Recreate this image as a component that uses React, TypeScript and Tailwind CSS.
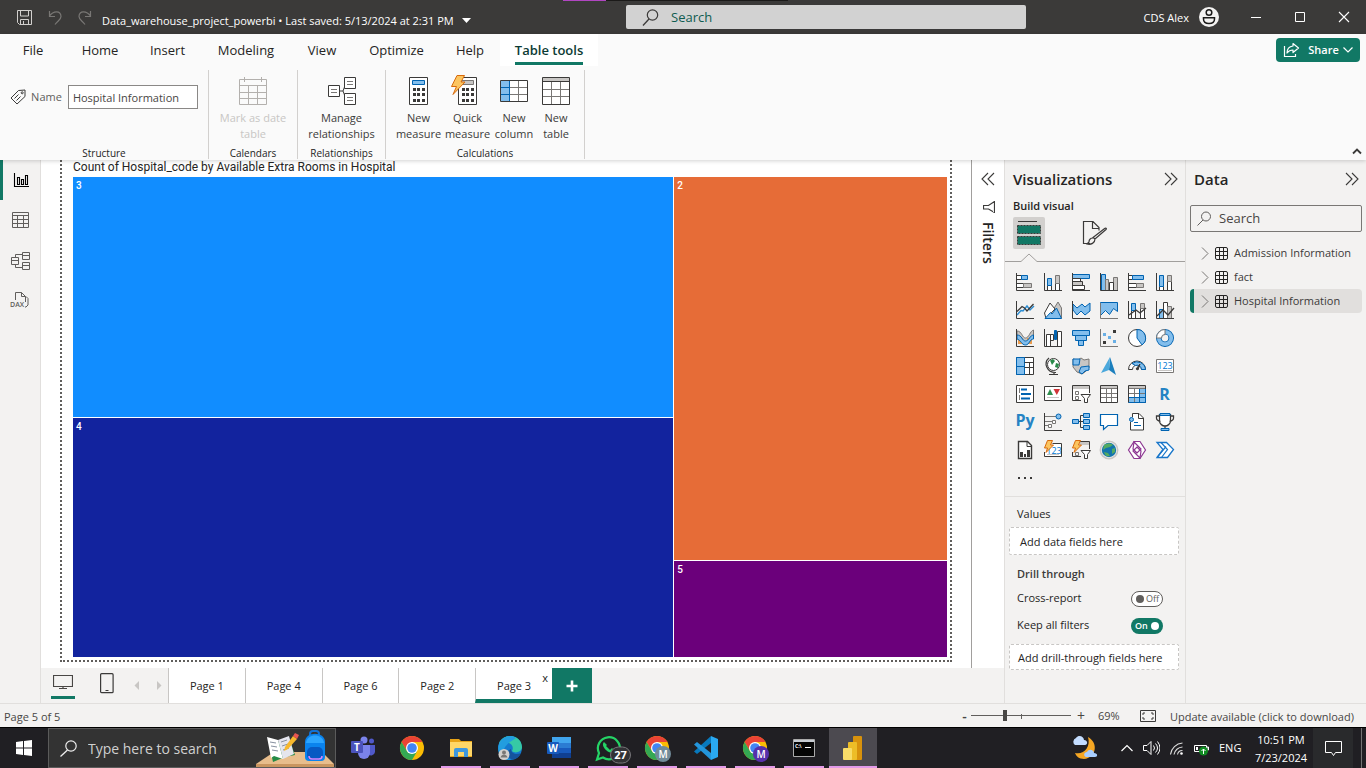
import React from "react";
import type { ReactNode } from "react";

const K = "#3b3a39";
const G = "#797775";
const GF = "#c8c6c4";
const B = "#0063b1";
const BF = "#83beec";

type SvgProps = { w?: number; h?: number; children: ReactNode; className?: string };

function Svg({ w = 18, h = 18, children, className }: SvgProps) {
  return (
    <svg
      aria-hidden="true"
      width={w}
      height={h}
      viewBox={`0 0 ${w} ${h}`}
      fill="none"
      className={`shrink-0 ${className ?? ""}`}
    >
      {children}
    </svg>
  );
}

const Axis = () => <path d="M.5 0v17.5H18" stroke={K} />;

const Bolt = () => (
  <path d="M3.5-.5h5L6.5 4h3L2 11.5 3.5 7H.5z" fill="#fcc560" stroke="#d86a0c" strokeLinejoin="round" />
);

const visuals: { name: string; art: ReactNode }[] = [
  { name: "Stacked bar chart", art: <><path d="M.5 2.5h5v4h-5zM.5 10.5h7v4h-7z" stroke={K} fill="#fff" /><path d="M5.5 2.5h6v4h-6z" fill={BF} stroke={B} /><path d="M7.5 10.5h8v4h-8z" fill={GF} stroke={G} /><Axis /></> },
  { name: "Stacked column chart", art: <><path d="M3.5 12.5h4v5h-4zM11.5 10.5h4v7h-4z" stroke={K} fill="#fff" /><path d="M3.5 5.5h4v7h-4z" fill={BF} stroke={B} /><path d="M11.5 2.5h4v8h-4z" fill={GF} stroke={G} /><Axis /></> },
  { name: "Clustered bar chart", art: <><path d="M.5 1.500h17v4H.5z" fill={BF} stroke={B} /><path d="M.5 5.5h8v3h-8zM.5 12.5h12v4H.5z" fill="#fff" stroke={K} /><path d="M.5 8.5h10v4H.5z" fill={GF} stroke={K} /><Axis /></> },
  { name: "Clustered column chart", art: <><path d="M1.5 1.5h4v16h-4z" fill={BF} stroke={B} /><path d="M5.5 6.5h3v11h-3zM13.5 4.5h4v13h-4z" fill={GF} stroke={G} /><path d="M9.5 9.5h4v8h-4z" fill="#fff" stroke={K} /><Axis /></> },
  { name: "100% stacked bar chart", art: <><path d="M.5 2.5h4v4h-4zM.5 10.5h8v4h-8z" stroke={K} fill="#fff" /><path d="M4.5 2.5h11v4h-11z" fill={BF} stroke={B} /><path d="M8.5 10.5h7v4h-7z" fill={GF} stroke={G} /><Axis /></> },
  { name: "100% stacked column chart", art: <><path d="M3.5 13.5h4v4h-4zM11.5 8.5h4v9h-4z" stroke={K} fill="#fff" /><path d="M3.5 2.5h4v11h-4z" fill={BF} stroke={B} /><path d="M11.5 2.5h4v6h-4z" fill={GF} stroke={G} /><Axis /></> },
  { name: "Line chart", art: <><path d="m1 14 4-4.500 2 .500 4-5 3 4 4-4" stroke="#2a8dd4" strokeWidth="1.400" /><path d="m1 9.500 4-1L10 4l3 5 5-5" stroke="none" /><path d="m1 10.500 5-5 2.500 1.500 2.500 3L17.500 3" stroke={K} strokeWidth="1.300" /><Axis /></> },
  { name: "Area chart", art: <><path d="M9 9 14 1l3.500 6v10L9 9z" fill={GF} stroke={G} /><path d="M.5 12 6 2l5 6-9 9.500z" fill="#fff" stroke={K} /><path d="m1 17.500 5.500-6L8 13l4.500-6 5 10.500z" fill={BF} stroke={B} /></> },
  { name: "Stacked area chart", art: <><path d="m1 3 4 4 5-4 3 3 5-4v8l-5 4-4-4-4 4-4-5z" fill={BF} stroke={B} /><Axis /></> },
  { name: "100% stacked area chart", art: <><path d="M.5 1.500h17v9l-4-3-4 6-4-4-5 5z" fill={BF} stroke={B} /><path d="M.5 2v15.500H18" stroke={G} /></> },
  { name: "Line and stacked column chart", art: <><path d="M3.5 9.5h4v8h-4zM12.500 6.5h4v11h-4z" fill="#fff" stroke={K} /><path d="M3.5 2.5h4v7h-4z" fill={BF} stroke={B} /><path d="M12.500 2.5h4v5h-4z" fill={GF} stroke={G} /><path d="m1 14 7-5 4 3 6-5" stroke={K} strokeWidth="1.300" /><Axis /></> },
  { name: "Line and clustered column chart", art: <><path d="M3.5 8.5h4v9h-4z" fill={BF} stroke={B} /><path d="M7.5 1.5h4v16h-4z" fill="#fff" stroke={K} /><path d="M11.5 5.5h4v12h-4z" fill={GF} stroke={G} /><path d="m1 15 6-6 5 5 6-7" stroke={K} strokeWidth="1.300" /><Axis /></> },
  { name: "Ribbon chart", art: <><path d="M1 2c5 0 5 7 8.500 7S14 2 17.500 1v6c-4 1-4 6-8 6S5 9 1 8z" fill={GF} stroke={G} /><path d="M2 9h5v6H2zM11 9h5v6h-5z" fill="#ec9b4b" /><path d="M1 6c5 0 5 6 8.500 6S14 6 17.500 6v4c-4 0-4 6-8 6S5 11 1 10z" fill={BF} stroke={B} /><Axis /></> },
  { name: "Waterfall chart", art: <><path d="M2.5 5.5h4v12h-4zM13.5 2.5h4v15h-4zM6.500 5.5h3v6h-3z" fill="#fff" stroke={K} /><path d="M10.500 1.500h2v9h-2z" fill={B} stroke={B} /><path d="M.5 0v17.500H18" stroke={K} /></> },
  { name: "Funnel chart", art: <><path d="M.5 1.500h17v5H.5z" fill={BF} stroke={B} /><path d="M3.500 6.500h11v5h-11zM6.500 11.500h5v5h-5z" fill={BF} stroke={B} /></> },
  { name: "Scatter chart", art: <><path d="M3 4h3v3H3zM8 7h3v3H8zM13 11h3v3h-3z" fill="#69afe5" /><path d="M13 1h3v3h-3zM3 12h3v3H3z" fill={K} /><path d="M.5 0v17.500H18" stroke={G} /></> },
  { name: "Pie chart", art: <><circle cx="9" cy="9" r="8.500" fill="#fff" stroke={K} /><path d="M9 .5a8.500 8.500 0 0 1 5 15.400L9 9z" fill={BF} stroke={B} /></> },
  { name: "Donut chart", art: <><circle cx="9" cy="9" r="6.200" stroke={B} strokeWidth="5.600" /><circle cx="9" cy="9" r="6.200" stroke={BF} strokeWidth="3.800" /><path d="M.5 9A8.500 8.500 0 0 1 9 .5v5A3.500 3.500 0 0 0 5.500 9z" fill="#fff" stroke={G} /></> },
  { name: "Treemap", art: <><path d="M.5 .5h17v17H.5z" fill="#fff" stroke={K} /><path d="M.5 .5h8v9h-8zM.5 9.500h8v8h-8z" fill={BF} stroke={B} /><path d="M8.500 5.500h9M13.500 5.500v5m0 0h4m-9 0h5v7" stroke={K} /></> },
  { name: "Map", art: <><circle cx="9.500" cy="7.500" r="6" fill="#fff" stroke={K} /><path d="M6 3.500 9 2l2 2-3 4zM12 6l3 1-1 4-3-1z" fill="#2b8a4b" /><path d="M5 1C-1 6 3 16 12 15.500M5 17.500h9M10 15v2.500" stroke={K} strokeWidth="1.200" /></> },
  { name: "Filled map", art: <><path d="m1 2 5 1 3-2 3 2 5-1v9l-4 4-3 2-5-2-4-5z" fill={GF} stroke={G} /><path d="M1 2h7l-1 6H1zM9 10l8-1v4l-4 1-3 3-3-2z" fill={BF} stroke={B} /></> },
  { name: "Azure map", art: <><path d="m10 0 6 18-7-5z" fill="#1b7fbd" /><path d="M10 0 1 16l8-3z" fill="#4ba8dc" /></> },
  { name: "Gauge", art: <><path d="M.5 12.500a8.500 8.500 0 0 1 17 0h-4a4.500 4.500 0 0 0-9 0z" fill="#fff" stroke={K} /><path d="M4 6.500A8.500 8.500 0 0 1 17.500 12.500h-4a4.500 4.500 0 0 0-6-4z" fill={BF} stroke={B} /><path d="m8 12 4-5-2 6z" fill={K} stroke={K} /></> },
  { name: "Card", art: <><path d="M.5 2.500h17v13H.5z" fill="#fff" stroke={G} /><text x="9" y="12" fontSize="9" fill="#0078d4" textAnchor="middle">123</text><path d="M2 13.500h14" stroke={GF} /></> },
  { name: "Multi-row card", art: <><path d="M.5 .5h17v17H.5z" fill="#fff" stroke={K} /><path d="M5 4.500h6M5 9h10M5 13.500h9" stroke={B} strokeWidth="1.800" /><path d="M3.500 3v5m0 2v5" stroke={G} /></> },
  { name: "KPI", art: <><path d="M.5 1.500h17v14H.5z" fill="#fff" stroke={K} /><path d="m6 4 3 6H3z" fill="#2f8f4e" /><path d="M9.500 4H16l-3.200 6z" fill="#d13438" /><path d="M3 12.500h12" stroke={GF} /></> },
  { name: "Slicer", art: <><path d="M17.500 8V.5H.5v15H9" fill="#fff" stroke={K} /><path d="M1 1h16v3H1z" fill={GF} /><path d="M3.500 6.500h3v3h-3zM3.500 11.500h3v3h-3z" stroke={G} /><path d="M9 9.500h9.500l-3 4v4h-3v-4z" fill="#fff" stroke={K} /></> },
  { name: "Table", art: <><path d="M.5 .5h17v17H.5z" fill="#fff" stroke={K} /><path d="M1 1h16v2H1z" fill={GF} /><path d="M1 3.500h16M1 8.500h16M1 12.500h16M6.500 4v13M11.500 4v13" stroke={G} /></> },
  { name: "Matrix", art: <><path d="M.5 .5h17v17H.5z" fill="#fff" stroke={K} /><path d="M1 1h16v2H1z" fill={GF} /><path d="M12 4h5v13H1v-4h11z" fill={BF} /><path d="M1 3.500h16M1 8.500h16M6.500 4v13M11.500 4v13" stroke={G} /><path d="M1 12.500h16M11.500 4v13M.5 17.500h17V4" stroke={B} /></> },
  { name: "R script visual", art: <text x="8.500" y="15" fontSize="16" fontWeight="700" fill="#2583c4" textAnchor="middle">R</text> },
  { name: "Python visual", art: <text x="9" y="13" fontSize="16" fontWeight="700" fill="#2583c4" textAnchor="middle">Py</text> },
  { name: "Key influencers", art: <><path d="M1 3.500h12M1 8.500h9M1 12.500h4" stroke={G} /><circle cx="14.500" cy="3.500" r="2.500" fill={BF} stroke={B} /><path d="M8.500 7.500h3v3h-3zM4.500 11.500h3v3h-3z" fill="#fff" stroke={G} /><Axis /></> },
  { name: "Decomposition tree", art: <><path d="M6 8.500h6M12 2.500H8.500v12H12" stroke={K} /><path d="M.5 6.500h6v4h-6zM11.500 .5h6v4h-6zM11.500 6.500h6v4h-6zM11.500 12.500h6v4h-6z" fill={BF} stroke={B} /></> },
  { name: "Q and A", art: <path d="M.5 1.500h17v11H8l-4.500 4V12.500h-3z" fill="#fff" stroke={B} strokeWidth="1.200" /> },
  { name: "Smart narrative", art: <><path d="M4.500 4V.5H11L15.500 5v12h-13V9" fill="#fff" stroke={K} /><path d="M10.500 1v4.500H15" stroke={K} /><circle cx="3.500" cy="6.500" r="2" fill={BF} stroke={B} /><path d="M6 9.500h4M6 12.500h7" stroke={B} /></> },
  { name: "Goals", art: <><path d="M4 3H.5v2c0 2 2 3 4 3.500M14 3h3.500v2c0 2-2 3-4 3.500M3.500 1v7c0 3 3 5 5.500 5s5.500-2 5.500-5V1M9 13v3" fill="#fff" stroke={K} strokeWidth="1.300" /><path d="M4 .5h10v2H4zM5 15.500h8v2H5z" fill={BF} stroke={B} /></> },
  { name: "Paginated report", art: <><path d="M2.500 .5h9l4 4v13h-13z" fill="#fff" stroke={K} strokeWidth="1.400" /><path d="M11 1v4.500h4" stroke={K} /><path d="M4 11h3v5H4zM8 13h2v3H8zM11 9h3v7h-3z" fill={K} /></> },
  { name: "New card", art: <><path d="M8.500 2.500h9v13H.5V11" fill="#fff" stroke={K} /><text x="10" y="12.500" fontSize="9" fill="#0078d4" textAnchor="middle">123</text><path d="M3 13.500h12" stroke={GF} /><Bolt /></> },
  { name: "New slicer", art: <><path d="M7 .5h10.500V8M9 15.500H.5V11" stroke={K} /><path d="M8 1h9v3H8z" fill={GF} /><path d="M3.500 11.500h3v3h-3z" stroke={G} /><path d="M9 9.500h9.500l-3 4v4h-3v-4z" fill="#fff" stroke={K} /><Bolt /></> },
  { name: "ArcGIS maps", art: <><circle cx="9" cy="9" r="8.700" fill="#f3f2f1" stroke={GF} strokeWidth="1.500" /><circle cx="9" cy="9" r="7.200" fill="#1374ac" /><path d="M4 4c3-2 7-2 9 0l-3 2-4 1-3 2zM12 8l3-1v4l-3 2zM4 11l4 1 2 3c-4 1-5-1-6-4z" fill="#53aa61" /></> },
  { name: "Power Apps", art: <><path d="M6 .5h6L17.500 9 12 17.500H6L.5 9z" fill="#fff" stroke="#8d3792" strokeWidth="1.200" /><path d="M6 1 13 8 9 12 5 8zM12 17 5 10 9 6l4 4z" stroke="#8d3792" strokeWidth="1.200" /></> },
  { name: "Power Automate", art: <><path d="M1 1.500h9.500l7 7-6 8H1l6-8z" fill="#fff" stroke="#1976c9" strokeWidth="1.300" /><path d="m5 1.500 6.500 7-6 8M1 16.500l9-11" stroke="#1976c9" strokeWidth="1.200" /></> },
];

const tabs: { label: string; width: string }[] = [
  { label: "File", width: "w-[66px]" },
  { label: "Home", width: "w-[68px]" },
  { label: "Insert", width: "w-[67px]" },
  { label: "Modeling", width: "w-[90px]" },
  { label: "View", width: "w-[62px]" },
  { label: "Optimize", width: "w-[87px]" },
  { label: "Help", width: "w-[60px]" },
];

function TitleBar() {
  return (
    <header className="relative flex h-[34px] shrink-0 items-center bg-[#3b3a39] text-white">
      <div className="absolute left-[563px] top-0 flex h-px w-[225px] bg-[#1b1a19]"><span className="h-px w-[43px] bg-[#b146c2]" /></div>
      <div className="flex w-[626px] shrink-0 items-center pl-4">
        <button aria-label="Save" className="mr-3.5"><Svg w={17} h={17}><path d="M1.500 1.500h14v14H3.500l-2-2zM4.500 2v5h8V2M4.500 15.500v-5h8v5M7.500 12v3" stroke="#d2d0ce" /></Svg></button>
        <button aria-label="Undo" className="mr-3.5"><Svg w={16} h={17}><path d="M2.500 2v5.500H8M2.500 7C6 2 14 1 14 7.500c0 3-3 4-6 8" stroke="#797775" strokeWidth="1.200" /></Svg></button>
        <button aria-label="Redo" className="mr-[9px]"><Svg w={16} h={17}><path d="M13.500 2v5.500H8M13.500 7C10 2 2 1 2 7.500c0 3 3 4 6 8" stroke="#797775" strokeWidth="1.200" /></Svg></button>
        <button className="flex items-center gap-2 pt-2 text-[11px] font-medium leading-4 whitespace-nowrap">
          Data_warehouse_project_powerbi • Last saved: 5/13/2024 at 2:31 PM
          <Svg w={9} h={9}><path d="M0 1h9L4.500 6z" fill="#fff" /></Svg>
        </button>
      </div>
      <label className="flex h-6 w-[400px] items-center gap-3 rounded-[2px] bg-[#d2d2d2] pl-4">
        <Svg w={17} h={17}><circle cx="10.500" cy="6" r="5.200" stroke={K} strokeWidth="1.200" /><path d="m7 10-6 6.500" stroke={K} strokeWidth="1.300" /></Svg>
        <input type="search" aria-label="Search commands" placeholder="Search" className="min-w-0 flex-1 bg-transparent text-[13px] leading-5 outline-none placeholder:text-[#0f5c50]" />
      </label>
      <div className="ml-auto flex items-center">
        <span className="mr-2.5 pt-0.5 text-[11px] font-medium">CDS Alex</span>
        <button aria-label="Account" className="mr-[31px]"><Svg w={20} h={20}><circle cx="10" cy="10" r="10" fill="#f3f2f1" /><circle cx="10" cy="5.500" r="2.800" stroke="#1b1a19" strokeWidth="1.500" /><path d="M4.500 10.800h11v1.200c0 3-2.500 4.500-5.500 4.500S4.500 15 4.500 12z" stroke="#1b1a19" strokeWidth="1.500" /></Svg></button>
        <button aria-label="Minimize" className="mr-8"><Svg w={12} h={12}><path d="M1 6.500h10" stroke="#fff" /></Svg></button>
        <button aria-label="Maximize" className="mr-8"><Svg w={12} h={12}><path d="M1.500 1.500h9v9h-9z" stroke="#fff" /></Svg></button>
        <button aria-label="Close" className="mr-4"><Svg w={12} h={12}><path d="m1 1 10 10M11 1 1 11" stroke="#fff" strokeWidth="1.100" /></Svg></button>
      </div>
    </header>
  );
}

function RibbonGroup({ label, className, children }: { label: string; className: string; children: ReactNode }) {
  return (
    <section aria-label={label} className={`flex h-[89px] shrink-0 flex-col border-r border-[#d2d0ce] ${className}`}>
      <div className="flex flex-1 justify-center">{children}</div>
      <div className="text-center text-[10px] leading-3">{label}</div>
    </section>
  );
}

function RibbonButton({ lines, icon, className = "", disabled }: { lines: [string, string]; icon: ReactNode; className?: string; disabled?: boolean }) {
  return (
    <button disabled={disabled} className={`flex shrink-0 flex-col items-center text-[11px] leading-4 whitespace-nowrap ${disabled ? "text-[#c8c6c4]" : "text-[#3b3a39]"} ${className}`}>
      <span className="mb-1 mt-1.5 flex h-[30px] items-center">{icon}</span>
      <span>{lines[0]}</span>
      <span>{lines[1]}</span>
    </button>
  );
}

function Calculator() {
  return (
    <>
      <path d="M5.500 1.500h18v27h-18z" fill="#fff" stroke={K} />
      <path d="M9 12h3v3H9zM13 12h3v3h-3zM18 12h3v3h-3zM9 17h3v3H9zM13 17h3v3h-3zM18 17h3v3h-3zM9 23h3v3H9zM13 23h3v3h-3zM18 23h3v3h-3z" fill={K} />
    </>
  );
}

function Ribbon() {
  return (
    <div className="relative z-10 h-[126px] shrink-0 bg-[#fafafa] text-[#252423] shadow-[0_1px_4px_rgba(0,0,0,0.18)]">
      <nav aria-label="Ribbon tabs" className="flex h-8 text-[13px]">
        {tabs.map((t) => (
          <button key={t.label} className={`shrink-0 pt-0.5 ${t.width}`}>{t.label}</button>
        ))}
        <button className="relative w-[98px] shrink-0 bg-white pt-0.5 font-semibold text-[#0c3b34]">
          Table tools
          <span className="absolute bottom-px left-[15px] right-[15px] h-[3px] bg-[#117865]" />
        </button>
        <button className="ml-auto mr-1.5 mt-1 flex h-6 w-[84px] shrink-0 items-center justify-center gap-2 rounded-[4px] bg-[#117865] text-[11px] font-semibold text-white">
          <Svg w={17} h={16}><path d="M1.500 4v10.500h11V12" stroke="#fff" strokeWidth="1.200" /><path d="M10 1.500 15.500 6 10 10.500V8c-3 0-4.500 1-6 3 0-4 2.500-6.500 6-7z" stroke="#fff" strokeWidth="1.200" strokeLinejoin="round" /></Svg>
          <span className="-mr-1">Share</span>
          <Svg w={10} h={8}><path d="m.5 1.500 4.500 4.500 4.500-4.500" stroke="#fff" strokeWidth="1.200" /></Svg>
        </button>
      </nav>
      <div className="flex pt-1">
        <RibbonGroup label="Structure" className="w-[209px]">
          <label className="mt-[15px] flex h-6 items-center text-[11px] text-[#605e5c]">
            <Svg w={17} h={16} className="mr-1"><path d="m1 9 7.500-7.500L15 1v6.500L7 15z" stroke={K} strokeLinejoin="round" /><circle cx="12.200" cy="3.800" r="1" stroke={K} /><path d="m4.500 9.500 4-4M6.500 11.500l4-4" stroke={K} /></Svg>
            <span className="mr-1.5">Name</span>
            <input defaultValue="Hospital Information" className="h-6 w-[130px] border border-[#8a8886] bg-white px-1 text-[11px] text-[#484644] outline-none" />
          </label>
        </RibbonGroup>
        <RibbonGroup label="Calendars" className="w-[89px]">
          <RibbonButton disabled lines={["Mark as date", "table"]} icon={<Svg w={30} h={30}><path d="M1.500 3.500h27v25h-27zM1.500 9.500h27M1.500 16.500h27M1.500 22.500h27M10.500 9.500v19M19.500 9.500v19M6.500 1v5M23.500 1v5" stroke="#b3b0ad" /></Svg>} />
        </RibbonGroup>
        <RibbonGroup label="Relationships" className="w-[88px]">
          <RibbonButton lines={["Manage", "relationships"]} icon={<Svg w={30} h={30}><path d="M13 15h3l3-8M16 15l3 8" stroke={K} /><path d="M1.500 9.500h11v11h-11zM17.500 1.500h11v11h-11zM17.500 17.500h11v11h-11z" fill="#fff" stroke={K} /><path d="M4 13.500h6M4 16.500h6M20 5.500h6M20 8.500h6M20 21.500h6M20 24.500h6" stroke={G} /></Svg>} />
        </RibbonGroup>
        <RibbonGroup label="Calculations" className="w-[199px]">
          <RibbonButton className="w-[49px]" lines={["New", "measure"]} icon={<Svg w={29} h={30}><Calculator /><path d="M8.500 4.500h12v4h-12z" fill={BF} stroke={B} /></Svg>} />
          <RibbonButton className="w-[49px]" lines={["Quick", "measure"]} icon={<Svg w={29} h={30} className="overflow-visible"><Calculator /><path d="M8.500 4.500h12v4h-12z" fill={GF} stroke={G} /><path d="M4-.5h7.500L8 6h4L0 18.500 3.500 10.500H-1.500z" fill="#fcc560" stroke="#d86a0c" strokeLinejoin="round" /></Svg>} />
          <RibbonButton className="w-[44px]" lines={["New", "column"]} icon={<Svg w={28} h={30}><path d="M.5 4.500h27v21H.5z" fill="#fff" stroke={K} /><path d="M1 5h8v20H1z" fill={BF} /><path d="M9 11.500h18M9 18.500h18M18.500 5v20" stroke={G} /><path d="M1 11.500h8M1 18.500h8M9.500 5v20" stroke={B} /></Svg>} />
          <RibbonButton className="w-[40px]" lines={["New", "table"]} icon={<Svg w={28} h={30}><path d="M.5 1.500h27v27H.5z" fill="#fff" stroke={K} /><path d="M1 2h26v3H1z" fill={GF} /><path d="M1 5.500h26" stroke={K} /><path d="M1 13.500h26M1 20.500h26M9.500 6v22M18.500 6v22" stroke={G} /></Svg>} />
        </RibbonGroup>
        <button aria-label="Collapse ribbon" className="ml-auto mr-1 self-end pb-1"><Svg w={10} h={8}><path d="m1 6.500 4-4 4 4" stroke={K} strokeWidth="1.800" /></Svg></button>
      </div>
    </div>
  );
}

function ViewRail() {
  const c = "#605e5c";
  return (
    <nav aria-label="Views" className="flex w-[41px] shrink-0 flex-col border-r border-[#e1dfdd] bg-[#f3f2f1]">
      <button aria-label="Report view" className="flex h-10 w-full items-center justify-center border-l-[3px] border-[#117865] pr-0.5"><Svg w={16} h={16}><path d="M1.500 1v13.500H16M4.500 5.500h2v7h-2zM8.500 7.500h2v5h-2zM12.500 3.500h2v9h-2z" stroke="#000" strokeWidth="1.100" /></Svg></button>
      <button aria-label="Table view" className="flex h-10 w-full items-center justify-center"><Svg w={17} h={16}><path d="M.5 .5h16v15H.5zM.5 3.500h16M.5 7.500h16M.5 11.500h16M5.500 3.500v12M11.500 3.500v12" stroke={c} /></Svg></button>
      <button aria-label="Model view" className="flex h-10 w-full items-center justify-center"><Svg w={19} h={19}><path d="M.5 6.500h7v7h-7zM.5 9.500h7M11.500 1.500h7v7h-7zM11.500 4.500h7M11.500 11.500h7v7h-7zM11.500 14.500h7M4.500 6.500v-3h7M4.500 13.500v3h7" stroke={c} /></Svg></button>
      <button aria-label="DAX query view" className="flex h-10 w-full items-center justify-center"><Svg w={20} h={18}><path d="M5.500 9V1.500h6l4 4V11M11.500 1.500v4h4M15 16h1l2-2V7.500l-2-2" stroke={c} /><text x="0" y="16" fontSize="7" fontWeight="600" fill={c}>DAX</text></Svg></button>
    </nav>
  );
}

function Treemap() {
  return (
    <div className="flex min-h-0 min-w-0 flex-1 flex-col bg-white pb-1.5 pl-[19px] pr-[19px]">
      <div className="flex flex-1 flex-col border-x-2 border-b-2 border-dotted border-[#605e5c] pb-[3px] pl-[11px] pr-[3px]">
        <h2 className="h-[17px] font-['Roboto',sans-serif] text-[12px] leading-[14px] text-[#252423]">Count of Hospital_code by Available Extra Rooms in Hospital</h2>
        <div className="grid flex-1 grid-cols-[601fr_273fr] gap-px font-['Roboto',sans-serif] text-[10px] font-medium leading-3 text-white">
          <div className="grid grid-rows-2 gap-px">
            <div className="bg-[#118dff] px-[3px] py-[3px]">3</div>
            <div className="bg-[#12239e] px-[3px] py-[3px]">4</div>
          </div>
          <div className="grid grid-rows-[383fr_96fr] gap-px">
            <div className="bg-[#e66c37] px-[3px] py-[3px]">2</div>
            <div className="bg-[#6b007b] px-[3px] py-[3px]">5</div>
          </div>
        </div>
      </div>
    </div>
  );
}

function Chevrons({ left = false }: { left?: boolean }) {
  return (
    <Svg w={14} h={14}>
      <path d={left ? "M7 1 1 7l6 6M13 1 7 7l6 6" : "m1 1 6 6-6 6M7 1l6 6-6 6"} stroke={K} strokeWidth="1.100" />
    </Svg>
  );
}

function PageTabs() {
  return (
    <div className="flex h-[35px] shrink-0 bg-[#f3f2f1]">
      <div className="flex w-[127px] shrink-0 items-start">
        <button aria-label="Desktop layout" className="ml-2.5 mt-1 flex h-[27px] w-6 flex-col items-center justify-between border-b-[3px] border-[#117865] pt-0.5"><Svg w={20} h={16}><path d="M.5 1.500h19v11H.5zM10 12.500v2M6 14.500h8" stroke="#484644" strokeWidth="1.200" /></Svg></button>
        <button aria-label="Mobile layout" className="ml-[25px] mt-[5px]"><Svg w={14} h={21}><rect x=".6" y=".7" width="12.500" height="19" rx="1" stroke={K} strokeWidth="1.200" /><path d="M5.500 17.500h3" stroke={K} /></Svg></button>
        <button aria-label="Previous page" className="ml-5 mt-[13px]"><Svg w={6} h={9}><path d="M5 0v9L.5 4.500z" fill={GF} /></Svg></button>
        <button aria-label="Next page" className="ml-4 mt-[13px]"><Svg w={6} h={9}><path d="M1 0v9l4.500-4.500z" fill={GF} /></Svg></button>
      </div>
      <div className="flex w-[384px] shrink-0 text-[11px] text-[#252423]">
        {["Page 1", "Page 4", "Page 6", "Page 2"].map((p) => (
          <button key={p} className="flex-1 border-l border-[#c8c6c4] bg-white pt-0.5">{p}</button>
        ))}
        <div className="relative flex flex-1 border-b-4 border-l border-[#117865] border-l-[#c8c6c4] bg-white">
          <button className="flex-1 pt-1.5">Page 3</button>
          <button aria-label="Delete page" className="absolute right-1 top-0.5 text-[11px] leading-4">x</button>
        </div>
      </div>
      <button aria-label="New page" className="flex w-10 shrink-0 items-center justify-center bg-[#117865]"><Svg w={12} h={12}><path d="M6 .5v11M.5 6h11" stroke="#fff" strokeWidth="2.600" /></Svg></button>
    </div>
  );
}

function Toggle({ label, on }: { label: string; on?: boolean }) {
  return (
    <label className="flex h-[27px] items-center justify-between pl-3 pr-[22px] text-[11px] text-[#252423]">
      {label}
      <input type="checkbox" defaultChecked={on} className="peer sr-only" />
      {on ? (
        <span className="flex h-4 w-8 items-center justify-between rounded-full bg-[#117865] pl-1 pr-1 text-[9px] font-semibold text-white">On<span className="size-2 rounded-full bg-white" /></span>
      ) : (
        <span className="flex h-4 w-8 items-center justify-between rounded-full border border-[#605e5c] bg-white pl-1 pr-[3px] text-[9px] text-[#605e5c]"><span className="size-2 rounded-full bg-[#605e5c]" />Off</span>
      )}
    </label>
  );
}

function Visualizations() {
  return (
    <aside aria-label="Visualizations" className="flex w-[181px] shrink-0 flex-col overflow-hidden border-l border-[#e1dfdd] bg-[#f3f2f1]">
      <div className="flex h-[38px] items-center justify-between pl-2 pr-[7px]">
        <h2 className="text-[15px] font-semibold text-[#252423]">Visualizations</h2>
        <button aria-label="Collapse Visualizations"><Chevrons /></button>
      </div>
      <h3 className="pl-2 text-[11px] font-semibold leading-4 text-[#252423]">Build visual</h3>
      <div className="mt-[3px] flex h-8 pl-2">
        <button aria-label="Build visual" className="flex size-8 items-center justify-center rounded-[2px] bg-[#d2d0ce]"><Svg w={26} h={26}><path d="M2 1.500h19" stroke={K} /><path d="M1.500 5.500h23v8h-23zM1.500 16.500h23v8h-23z" fill="#117865" stroke={K} strokeDasharray="2 1" /></Svg></button>
        <button aria-label="Format page" className="ml-[34px] flex size-8 items-center justify-center"><Svg w={26} h={26}><path d="M8 23.500H1.500v-22H11l6 6v3M10.500 1.500v7H17M24 9.500 13 19l-2-1.500L22 9c2-1.500 3-.5 2 .5zM11 18c-3 0-4 2-4 4l-2 2c4 1 8-1 8-5" stroke={K} strokeWidth="1.200" /></Svg></button>
      </div>
      <Svg w={180} h={14} className="mt-1"><path d="M0 8.500h16L24 1l8 7.500h148" stroke="#a19f9d" /></Svg>
      <div className="mt-[6px] grid shrink-0 grid-cols-[repeat(6,18px)] gap-[10px] pl-[11px]">
        {visuals.map((v) => (
          <button key={v.name} aria-label={v.name} className="size-[18px]"><Svg className="overflow-visible">{v.art}</Svg></button>
        ))}
        <button aria-label="Get more visuals" className="flex h-[17px] items-center gap-1 pl-0.5"><i className="size-0.5 bg-[#3b3a39]" /><i className="size-0.5 bg-[#3b3a39]" /><i className="size-0.5 bg-[#3b3a39]" /></button>
      </div>
      <div className="mt-[10px] border-t border-[#e1dfdd] pt-2">
        <h3 className="pl-3 text-[11px] leading-[18px] text-[#252423]">Values</h3>
        <div className="mx-1 mr-1.5 mt-1 h-7 rounded-[2px] border border-dashed border-[#c8c6c4] bg-white pl-2.5 text-[11px] leading-7 text-[#252423]">Add data fields here</div>
        <h3 className="mt-2.5 pl-3 text-[11px] font-semibold leading-[18px] text-[#3b3a39]">Drill through</h3>
        <div className="mt-0.5"><Toggle label="Cross-report" /><Toggle label="Keep all filters" on /></div>
        <div className="mx-1 mr-1.5 mt-[5px] h-[26px] rounded-[2px] border border-dashed border-[#c8c6c4] bg-white pl-2 text-[11px] leading-[26px] whitespace-nowrap text-[#252423]">Add drill-through fields here</div>
      </div>
    </aside>
  );
}

function DataPane() {
  return (
    <aside aria-label="Data" className="flex w-[181px] shrink-0 flex-col border-l border-[#e1dfdd] bg-[#f3f2f1]">
      <div className="flex h-[38px] items-center justify-between pl-2 pr-[7px]">
        <h2 className="text-[15px] font-semibold text-[#252423]">Data</h2>
        <button aria-label="Collapse Data"><Chevrons /></button>
      </div>
      <label className="mx-1 mt-[7px] flex h-[27px] shrink-0 items-center gap-[7px] rounded-[2px] border border-[#797775] pl-1.5">
        <Svg w={15} h={15}><circle cx="9" cy="5.500" r="4.500" stroke="#605e5c" /><path d="m6 9-5.500 5.500" stroke="#605e5c" /></Svg>
        <input type="search" aria-label="Search fields" placeholder="Search" className="w-full min-w-0 bg-transparent pt-px text-[13px] outline-none placeholder:text-[#484644]" />
      </label>
      <ul className="mt-[9px] text-[11px] text-[#3b3a39]">
        {["Admission Information", "fact", "Hospital Information"].map((t, i) => (
          <li key={t} className={i === 2 ? "ml-1 mr-1 rounded-[4px] border-l-4 border-[#117865] bg-[#e1dfdd]" : "ml-2 mr-1"}>
            <button className="flex h-6 w-full items-center pl-[7px] whitespace-nowrap">
              <Svg w={8} h={13}><path d="m1 .5 6 6-6 6" stroke="#797775" /></Svg>
              <Svg w={13} h={13} className="ml-1.5 mr-1.5"><rect x=".5" y=".5" width="12" height="12" rx="1.500" stroke="#252423" /><path d="M.5 4.500h12M.5 8.500h12M4.500 .5v12M8.500 .5v12" stroke="#252423" /></Svg>
              <span className="pt-px">{t}</span>
            </button>
          </li>
        ))}
      </ul>
    </aside>
  );
}

function StatusBar() {
  return (
    <footer className="flex h-6 shrink-0 items-center border-t border-[#e1dfdd] bg-[#f3f2f1] pl-1 pr-1 text-[11px] text-[#484644]">
      <span className="pt-1">Page 5 of 5</span>
      <button aria-label="Zoom out" className="ml-auto mr-1 w-[5px] text-[14px] font-semibold leading-4">-</button>
      <span className="relative flex h-4 w-[100px] items-center">
        <span className="absolute left-[50px] top-1.5 h-[5px] w-px bg-[#605e5c]" />
        <input
          type="range"
          aria-label="Zoom"
          min={0}
          max={100}
          defaultValue={33}
          className="h-px w-full appearance-none bg-[#605e5c] [&::-webkit-slider-thumb]:h-[11px] [&::-webkit-slider-thumb]:w-1 [&::-webkit-slider-thumb]:appearance-none [&::-webkit-slider-thumb]:bg-[#484644]"
        />
      </span>
      <button aria-label="Zoom in" className="ml-1.5 w-2 text-[14px] leading-4">+</button>
      <span className="ml-[13px] w-[42px] pt-0.5">69%</span>
      <button aria-label="Fit to page"><Svg w={16} h={12}><path d="M.5 .5h15v11H.5z" stroke={K} /><path d="M5 3H3v2M11 3h2v2M5 9H3V7M11 9h2V7" stroke={K} /></Svg></button>
      <button className="ml-[14px] w-[192px] pt-1 text-left whitespace-nowrap">Update available (click to download)</button>
    </footer>
  );
}

function ChromeArt({ badge }: { badge?: string }) {
  return (
    <Svg w={26} h={26} className="overflow-visible">
      <circle cx="13" cy="13" r="12" fill="#fbbc04" />
      <path d="M13 7H23.400A12 12 0 0 0 2.600 7l5 8.500z" fill="#ea4335" />
      <path d="M2.600 7A12 12 0 0 0 13 25l5-8.500-9.500.5z" fill="#34a853" />
      <circle cx="13" cy="13" r="6" fill="#fff" />
      <circle cx="13" cy="13" r="4.800" fill="#4285f4" />
      {badge && <><circle cx="19" cy="19" r="8" fill={badge} /><text x="19" y="22.500" fontSize="10" fontWeight="600" fill="#fff" textAnchor="middle">M</text></>}
    </Svg>
  );
}

const apps: { name: string; line: boolean; active?: boolean; art: ReactNode }[] = [
  { name: "Teams", line: false, art: <Svg w={26} h={26}><circle cx="14" cy="5" r="3.500" fill="#7b83eb" /><circle cx="21.500" cy="6" r="2.500" fill="#5059c9" /><path d="M18 10h7v7a4 4 0 0 1-7 2z" fill="#5059c9" /><path d="M8 10h12v8a6 6 0 0 1-12 0z" fill="#7b83eb" /><rect x="1" y="6" width="12" height="12" rx="1" fill="#4b53bc" /><text x="7" y="15.500" fontSize="10" fontWeight="700" fill="#fff" textAnchor="middle">T</text></Svg> },
  { name: "Chrome", line: false, art: <ChromeArt /> },
  { name: "File Explorer", line: true, art: <Svg w={24} h={22}><path d="M1 2h9l2 2h11v16H1z" fill="#e8a317" /><path d="M1 5h22v14H1z" fill="#ffd667" /><path d="M5 20v-7q0-2 2-2h10q2 0 2 2v7h-4v-5H9v5z" fill="#3f97dd" /></Svg> },
  { name: "Edge", line: true, art: <Svg w={26} h={26}><circle cx="13" cy="13" r="12" fill="#1479ce" /><path d="M2 9C5-2 24-2 25 12c0 5-7 7-10 4 3-6-3-11-13-7z" fill="#36c9a5" /><path d="M2 9C5 1 14-1 19 3c-4 3-9 5-12 11C6 18 9 23 14 25 5 26-1 18 2 9z" fill="#229ddf" /><path d="M14 14c0 5 6 6 10 4-2 5-6 7-10 6-5-2-5-8 0-10z" fill="#15549d" /><circle cx="7" cy="19.500" r="5.500" fill="#d2d0ce" /><circle cx="7" cy="17.500" r="2" fill="#797775" /><path d="M3.500 22.500c1-4 6-4 7 0z" fill="#797775" /></Svg> },
  { name: "Word", line: true, art: <Svg w={26} h={24}><path d="M6 1h19v6H6z" fill="#41a5ee" /><path d="M6 7h19v5H6z" fill="#2b7cd3" /><path d="M6 12h19v5H6z" fill="#185abd" /><path d="M6 17h19v5H6z" fill="#103f91" /><rect x="1" y="6" width="12" height="12" rx="1" fill="#185abd" /><text x="7" y="15.500" fontSize="10" fontWeight="700" fill="#fff" textAnchor="middle">W</text></Svg> },
  { name: "WhatsApp", line: true, art: <Svg w={26} h={26} className="overflow-visible"><path d="M2 24.500 4 18a11 11 0 1 1 4 4.500z" stroke="#25d366" strokeWidth="2.200" /><path d="M9 7c-2 2-1 5 2 8s7 4 9 1l-3-3-2 2-4-4 1-1z" fill="#25d366" /><rect x="15.500" y="12" width="20" height="16" rx="8" fill="#323235" stroke="#77767a" /><text x="25.500" y="24" fontSize="11" fontWeight="700" fill="#fff" textAnchor="middle">27</text></Svg> },
  { name: "Chrome profile", line: true, art: <ChromeArt badge="#718b99" /> },
  { name: "Visual Studio Code", line: true, art: <Svg w={26} h={26}><path d="M18 1v7L4 19l-3-2.500z" fill="#0879bd" /><path d="M18 25v-7L4 7 1 9.500z" fill="#2496dc" /><path d="m18 1 7 3v18l-7 3z" fill="#2aa9f1" /></Svg> },
  { name: "Chrome work profile", line: true, art: <ChromeArt badge="#5630ab" /> },
  { name: "Command Prompt", line: true, art: <Svg w={24} h={20}><path d="M1.500 1.500h21v17h-21z" fill="#050505" stroke="#aaa" /><path d="M2 2h20v2H2z" fill="#c7ccd2" /><text x="3" y="10" fontSize="5" fontWeight="700" fill="#fff">C:\</text><path d="M13 9.500h6" stroke="#fff" /></Svg> },
  { name: "Power BI", line: true, active: true, art: <Svg w={26} h={26}><rect x="13" y="1" width="9" height="24" rx="1" fill="#d8920c" /><rect x="8" y="7" width="9" height="18" rx="1" fill="#edbd27" /><rect x="3" y="13" width="9" height="12" rx="1" fill="#f8dc68" /></Svg> },
];

function Taskbar() {
  return (
    <nav aria-label="Taskbar" className="flex h-[41px] shrink-0 border-t border-black bg-[#201f23] text-white">
      <button aria-label="Start" className="flex w-12 shrink-0 items-center justify-center"><Svg w={16} h={16}><path d="m0 2 7-1v6.500H0zM8 1l8-1v7.500H8zM0 8.500h7V15l-7-1zM8 8.500h8V16l-8-1z" fill="#fff" /></Svg></button>
      <label className="flex w-[288px] shrink-0 items-center border border-[#5b5b5b] bg-[#333] pl-[11px]">
        <Svg w={17} h={17}><circle cx="11" cy="6" r="5.200" stroke="#eee" strokeWidth="1.200" /><path d="m7.500 10-7 6.500" stroke="#eee" strokeWidth="1.300" /></Svg>
        <input type="search" aria-label="Search Windows" placeholder="Type here to search" className="ml-[11px] w-0 flex-1 bg-transparent text-[14px] outline-none placeholder:text-[#d0d0d0]" />
        <Svg w={79} h={38}>
          <path d="M0 35 18 23h48l12 12v3H0z" fill="#e8bd8c" /><path d="M0 35h78v3H0z" fill="#c9955f" />
          <path d="m12 11 11 2 10-4 6 17-10 2-12 5z" fill="#248a47" /><path d="m11 8 11 3 5 19-9-3-3 2z" fill="#fff" /><path d="m22 11 11-4 5 18-11 5z" fill="#e5e5ee" />
          <path d="m14 13 6 1M15 17l6 1M16 21l6 1M25 13l6-2M26 17l6-2M27 21l6-2" stroke="#8790a0" /><path d="m29 18 8-11 4 3-9 10-4 2z" fill="#f7b82d" /><path d="m37 7 2-3 4 2-2 4z" fill="#e95650" />
          <rect x="54" y="2" width="9" height="7" rx="3" stroke="#1272d8" strokeWidth="2" /><path d="M49 13c0-11 20-11 20 0v15q0 4-4 4H53q-4 0-4-4z" fill="#0a83ee" /><path d="M50 14c1-10 17-10 18 0z" fill="#2ca5ff" /><rect x="51" y="18" width="16" height="13" rx="5" fill="#0759c3" /><path d="M53 27q0 3 3 3h7q3 0 3-3" stroke="#d887ff" strokeWidth="1.500" />
        </Svg>
      </label>
      <div className="ml-[3px] flex shrink-0 gap-px">
        {apps.map((a) => (
          <button key={a.name} aria-label={a.name} className={`flex w-12 flex-col items-center ${a.active ? "bg-[#4c4a50]" : ""}`}>
            <span className="flex flex-1 items-center pt-0.5">{a.art}</span>
            <span className={`h-0.5 ${a.line ? "bg-[#e29ae8]" : ""} ${a.active ? "w-full" : "w-10"}`} />
          </button>
        ))}
      </div>
      <div className="ml-auto flex items-center">
        <button aria-label="Weather" className="mr-[22px]"><Svg w={28} h={26}><path d="M17 2c11 6 8 21-4 22-5 0-8-3-9-6 9 2 16-6 13-16z" fill="#f5a623" /><path d="M4 10a4 4 0 0 1 1-7c3-4 8-1 8 2 4 0 4 5 1 5z" fill="#c3dcff" /><path d="M15 22c-3-1-2-5 1-5 2-4 7-2 7 1 4 0 4 4 1 4z" fill="#a9ceff" /></Svg></button>
        <button aria-label="Show hidden icons" className="mr-2.5"><Svg w={12} h={12}><path d="m.5 9 5.500-5.500L11.500 9" stroke="#fff" strokeWidth="1.200" /></Svg></button>
        <button aria-label="Volume" className="mr-2.5"><Svg w={17} h={16}><path d="M.5 5.500H4l4-4v13l-4-4H.5zM10.500 5.500q2 2.500 0 5M12.500 3.500q4 4.500 0 9M14.500 1.500q5 6.500 0 13" stroke="#fff" /></Svg></button>
        <button aria-label="Network" className="mr-2.5"><Svg w={13} h={14}><path d="M.5 13.500A13 13 0 0 1 12.500 2M4 13.500A9 9 0 0 1 12.500 6M7.500 13.500A5 5 0 0 1 12.500 9.500" stroke="#ddd" strokeWidth="1.100" /><circle cx="11.500" cy="12.500" r="1.300" fill="#fff" /></Svg></button>
        <button aria-label="Battery" className="mr-2.5"><Svg w={16} h={16}><path d="M1.500 5.500h12v6h-12zM14 7h1.500v3H14z" stroke="#fff" /><path d="M3 7h2v3H3z" fill="#fff" /><circle cx="10.500" cy="11" r="4.500" fill="#108b22" /><path d="M10.500 14v-5M8.500 11l2-2 2 2" stroke="#fff" /></Svg></button>
        <span className="w-[24px] text-[11px]">ENG</span>
        <div className="ml-1.5 w-[64px] pt-px text-center text-[11px] leading-[18px] whitespace-nowrap">10:51 PM<br />7/23/2024</div>
        <button aria-label="Notifications" className="flex h-10 w-10 items-center justify-center bg-[#292a2c]"><Svg w={17} h={17}><path d="M.5 1.500h16v11h-6l-2 3-2-3h-6z" stroke="#fff" /></Svg></button>
        <span className="ml-2 mr-1 h-10 w-px bg-[#737373]" />
      </div>
    </nav>
  );
}

export default function App() {
  return (
    <div className="flex h-screen min-h-[640px] flex-col overflow-hidden bg-white font-['Open_Sans',sans-serif]">
      <TitleBar />
      <Ribbon />
      <main className="flex min-h-0 flex-1">
        <ViewRail />
        <div className="flex min-w-0 flex-1 flex-col">
          <div className="flex min-h-0 flex-1">
            <Treemap />
            <aside aria-label="Filters" className="flex w-[33px] shrink-0 flex-col items-center border-l border-[#a19f9d] bg-white pt-3">
              <button aria-label="Expand Filters"><Chevrons left /></button>
              <Svg w={12} h={12} className="ml-0.5 mt-[15px]"><path d="M11.500 .5v11L5.500 8H.5V4.500h5z" stroke={K} strokeWidth="1.200" /></Svg>
              <h2 className="mt-[9px] text-[14px] font-semibold leading-4 text-[#252423] [writing-mode:vertical-rl]">Filters</h2>
            </aside>
          </div>
          <PageTabs />
        </div>
        <Visualizations />
        <DataPane />
      </main>
      <StatusBar />
      <Taskbar />
    </div>
  );
}
